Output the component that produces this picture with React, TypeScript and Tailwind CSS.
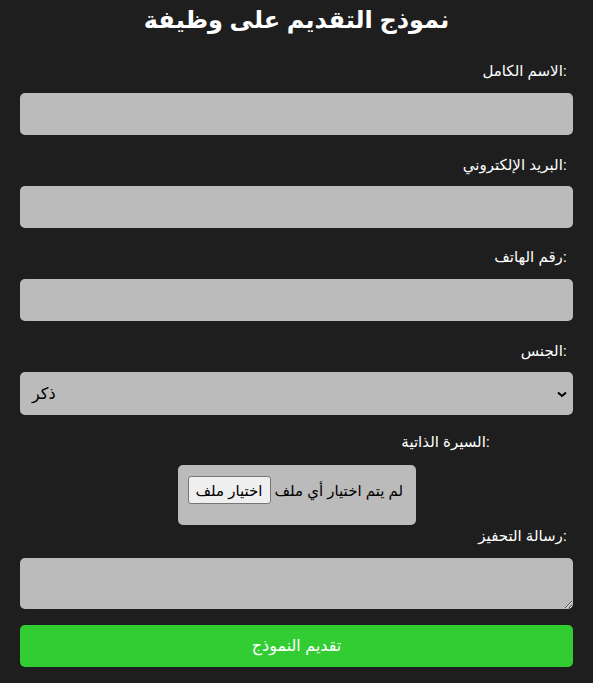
import React from "react";

const FONT = "font-['Liberation_Sans','DejaVu_Sans',Arial,sans-serif]";

interface FieldLabelProps {
	text: string;
	className?: string;
}

const FieldLabel: React.FC<FieldLabelProps> = ({ text, className }) => (
	<label className={`block text-right text-[15px] leading-[18px] text-white ${className ?? ""}`}>{text}</label>
);

const App: React.FC = () => {
	return (
		<div className={`min-h-[683px] w-full bg-[#1e1e1e] px-[20px] ${FONT}`} dir="ltr">
			<h1 className="m-0 text-center text-[24px] font-bold leading-[40px] text-white">نموذج التقديم على وظيفة</h1>

			<form className="flex flex-col" onSubmit={(e) => e.preventDefault()}>
				{/* name */}
				<FieldLabel text="الاسم الكامل:" className="mt-[22px] pr-[6px]" />
				<input type="text" className="mt-[13px] h-[42px] w-full rounded-[5px] bg-[#bbbbbb] px-3 outline-none" />

				{/* email */}
				<FieldLabel text="البريد الإلكتروني:" className="mt-[21px] pr-[6px]" />
				<input type="email" className="mt-[12px] h-[42px] w-full rounded-[5px] bg-[#bbbbbb] px-3 outline-none" />

				{/* phone */}
				<FieldLabel text="رقم الهاتف:" className="mt-[20px] pr-[6px]" />
				<input type="tel" className="mt-[13px] h-[42px] w-full rounded-[5px] bg-[#bbbbbb] px-3 outline-none" />

				{/* gender */}
				<FieldLabel text="الجنس:" className="mt-[21px] pr-[6px]" />
				<div className="mt-[12px] flex h-[43px] w-full items-center justify-between rounded-[5px] bg-[#bbbbbb] pl-[12px] pr-[4px] text-[16px] text-black">
					<span>ذكر</span>
					<svg width="14" height="14" viewBox="0 0 14 14" aria-hidden="true">
						<path d="M3 5.5 L7 9 L11 5.5" fill="none" stroke="#000" strokeWidth="2" />
					</svg>
				</div>

				{/* cv */}
				<FieldLabel text="السيرة الذاتية:" className="mt-[18px] mr-[83px]" />
				<div className="mx-auto mt-[14px] flex h-[60px] w-[238px] items-start gap-[4px] rounded-[5px] bg-[#bbbbbb] pl-[10px] pt-[11px] text-[15px] text-black">
					<span className="flex h-[28px] w-[83px] items-center justify-center rounded-[3px] border border-[#767676] bg-[#efefef] leading-none">
						اختيار ملف
					</span>
					<span className="flex h-[28px] items-center leading-none">لم يتم اختيار أي ملف</span>
				</div>

				{/* motivation */}
				<FieldLabel text="رسالة التحفيز:" className="mt-[2px] pr-[6px]" />
				<textarea className="mt-[13px] h-[51px] w-full rounded-[5px] bg-[#bbbbbb] px-3 outline-none" />

				<button
					type="submit"
					className="mt-[16px] h-[42px] w-full cursor-pointer rounded-[5px] bg-[#32cd32] text-[16px] text-white"
				>
					تقديم النموذج
				</button>
			</form>
		</div>
	);
};

export default App;
